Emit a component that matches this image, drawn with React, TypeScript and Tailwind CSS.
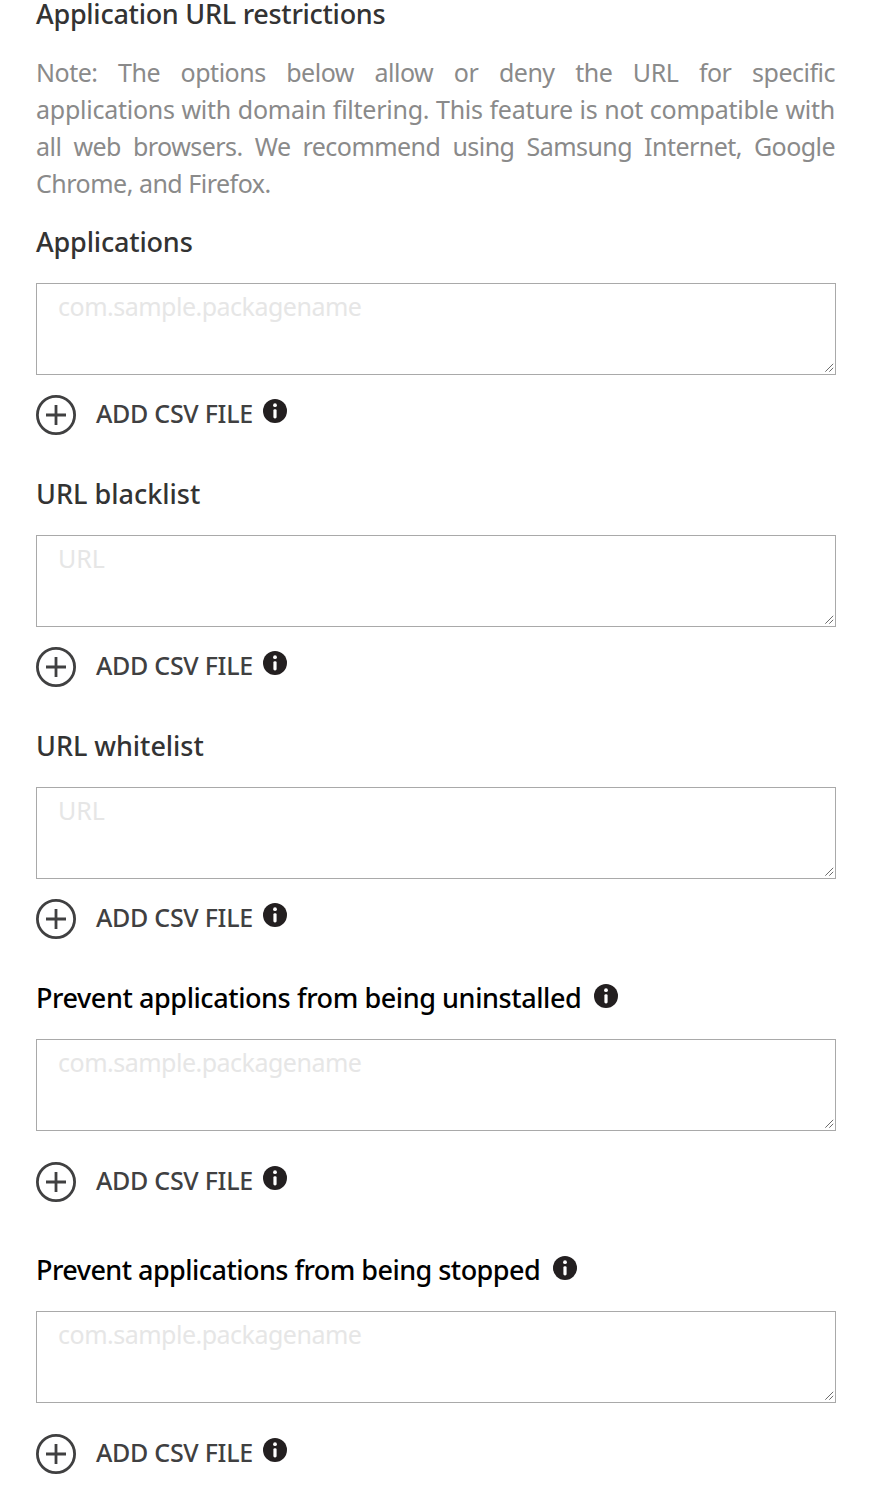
import React from "react";

type FieldProps = {
  label: string;
  placeholder: string;
  labelClass: string;
  info?: boolean;
  footerClass: string;
  placeholderClass: string;
};

function InfoIcon({ className }: { className: string }) {
  return (
    <svg viewBox="0 0 24 24" className={`h-6 w-6 shrink-0 ${className}`} aria-hidden="true">
      <circle cx="12" cy="12" r="12" fill="#231f20" />
      <circle cx="12" cy="6.2" r="1.9" fill="#fff" />
      <rect x="10.4" y="10.2" width="3.2" height="9.2" rx="1.4" fill="#fff" />
    </svg>
  );
}

function PlusIcon() {
  return (
    <svg viewBox="0 0 40 40" className="h-10 w-10 shrink-0" fill="none" stroke="#404041" aria-hidden="true">
      <circle cx="20" cy="20" r="18.6" strokeWidth="2.8" />
      <path d="M10 20H30M20 10V30" strokeWidth="2.8" />
    </svg>
  );
}

function ResizeGrip() {
  return (
    <svg
      viewBox="0 0 9 9"
      className="pointer-events-none absolute right-[2px] bottom-[3px] h-[9px] w-[9px]"
      stroke="#6b6b6b"
      strokeWidth="1"
      aria-hidden="true"
    >
      <path d="M0.3 8.7L8.2 0.8M4.3 8.7L8.2 4.8" />
    </svg>
  );
}

function Field({ label, placeholder, labelClass, info, footerClass, placeholderClass }: FieldProps) {
  return (
    <section className="flex flex-col">
      <div className="flex h-9 items-center">
        <h2 className={`text-[27px] leading-9 font-medium whitespace-nowrap ${labelClass}`}>{label}</h2>
        {info && <InfoIcon className="-mt-1 ml-[13px]" />}
      </div>
      <div className="relative mt-[23px] h-[92px] w-[800px]">
        <textarea
          aria-label={label}
          placeholder={placeholder}
          className={`block h-full w-full resize-none border border-[#a9a9a9] bg-white px-[21px] py-1 text-[25px] leading-[36px] placeholder:text-[#e6e6e6] ${placeholderClass}`}
        />
        <ResizeGrip />
      </div>
      <button type="button" className={`flex h-10 items-center text-left ${footerClass}`}>
        <PlusIcon />
        <span className="-mt-[5px] ml-5 w-[157px] text-[25px] leading-9 font-medium tracking-[-0.28px] whitespace-nowrap text-[#404041]">
          ADD CSV FILE
        </span>
        <InfoIcon className="-mt-2 ml-[10px]" />
      </button>
    </section>
  );
}

export default function App() {
  return (
    <main className="h-[1496px] w-full overflow-hidden bg-white pl-9 font-['Noto_Sans',sans-serif]">
      <h1 className="h-8 text-[27px] leading-[28px] font-medium tracking-[-0.27px] whitespace-nowrap text-[#333]">
        Application URL restrictions
      </h1>
      <div className="mt-[22px] w-[799px] text-[25px] leading-[37px] text-[#8a8a8a]">
        <p className="[text-align-last:justify] tracking-[-0.5px]">
          Note: The options below allow or deny the URL for specific
        </p>
        <p className="[text-align-last:justify] tracking-[-0.25px]">
          applications with domain filtering. This feature is not compatible with
        </p>
        <p className="[text-align-last:justify] tracking-[-0.55px]">
          all web browsers. We recommend using Samsung Internet, Google
        </p>
        <p className="tracking-[-0.5px]">Chrome, and Firefox.</p>
      </div>
      <div className="mt-[22px] flex flex-col">
        <Field label="Applications" placeholder="com.sample.packagename" labelClass="text-[#333] tracking-[-0.17px]" footerClass="mt-5" placeholderClass="tracking-[-0.5px]" />
        <div className="h-[41px]" />
        <Field label="URL blacklist" placeholder="URL" labelClass="text-[#333] tracking-[0px]" footerClass="mt-5" placeholderClass="tracking-[-0.1px]" />
        <div className="h-[41px]" />
        <Field label="URL whitelist" placeholder="URL" labelClass="text-[#333] tracking-[-0.05px]" footerClass="mt-5" placeholderClass="tracking-[-0.1px]" />
        <div className="h-[41px]" />
        <Field label="Prevent applications from being uninstalled" placeholder="com.sample.packagename" labelClass="text-black tracking-[-0.42px]" info footerClass="mt-[31px]" placeholderClass="tracking-[-0.5px]" />
        <div className="h-[50px]" />
        <Field label="Prevent applications from being stopped" placeholder="com.sample.packagename" labelClass="text-black tracking-[-0.54px]" info footerClass="mt-[31px]" placeholderClass="tracking-[-0.5px]" />
      </div>
    </main>
  );
}
